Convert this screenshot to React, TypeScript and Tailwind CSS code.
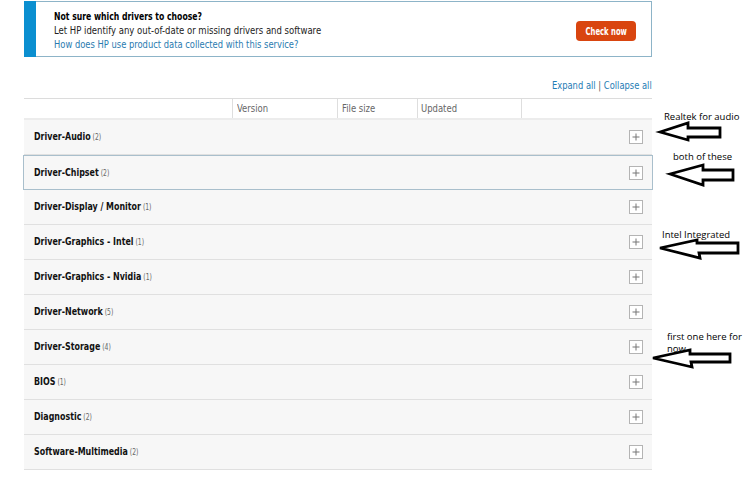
import React from "react";

const rows: { name: string; count: number; selected?: boolean }[] = [
  { name: "Driver-Audio", count: 2 },
  { name: "Driver-Chipset", count: 2, selected: true },
  { name: "Driver-Display / Monitor", count: 1 },
  { name: "Driver-Graphics - Intel", count: 1 },
  { name: "Driver-Graphics - Nvidia", count: 1 },
  { name: "Driver-Network", count: 5 },
  { name: "Driver-Storage", count: 4 },
  { name: "BIOS", count: 1 },
  { name: "Diagnostic", count: 2 },
  { name: "Software-Multimedia", count: 2 },
];

const hpFont = {
  fontFamily: '"DejaVu Sans Condensed", Roboto, sans-serif',
};
const noteFont = { fontFamily: '"Open Sans", Lato, sans-serif' };

function PlusBox() {
  return (
    <div className="w-[14px] h-[14px] border border-[#b4b4b4] bg-white flex items-center justify-center">
      <svg width="8" height="8" viewBox="0 0 8 8">
        <path d="M4 0.5V7.5M0.5 4H7.5" stroke="#777" strokeWidth="1" />
      </svg>
    </div>
  );
}

function Arrow({ d }: { d: string }) {
  return <path d={d} fill="white" stroke="black" strokeWidth="2.8" strokeLinejoin="miter" />;
}

export default function App() {
  return (
    <div className="relative w-[750px] h-[480px] bg-white overflow-hidden" style={hpFont}>
      <div className="ml-[24px] w-[628px]">
        {/* Banner */}
        <div className="mt-px h-[56px] border border-[#8db4c8] flex">
          <div className="w-[12px] bg-[#0b8fd0] -my-px -ml-px" />
          <div className="flex-1 pl-[18px] pt-[8px] text-[11px] leading-[14px] whitespace-nowrap">
            <div className="font-bold text-black origin-left scale-x-[0.78]">Not sure which drivers to choose?</div>
            <div className="text-[#222] origin-left scale-x-[0.86]">Let HP identify any out-of-date or missing drivers and software</div>
            <div className="text-[#2a7bb0] origin-left scale-x-[0.845]">How does HP use product data collected with this service?</div>
          </div>
          <div className="pr-[15px] pt-[19px]">
            <div className="w-[60px] h-[20px] rounded-[4px] bg-[#d9450f] text-white text-[10px] font-bold flex items-center justify-center">
              <span className="inline-block scale-x-[0.76]">Check now</span>
            </div>
          </div>
        </div>

        {/* Expand/collapse */}
        <div className="mt-[21px] h-[14px] flex justify-end text-[10.5px] leading-[14px] text-[#1f7db5]">
          <span className="inline-block origin-right scale-x-[0.885] whitespace-nowrap">
            Expand all<span className="mx-[3px] text-[#555]">|</span>Collapse all
          </span>
        </div>

        {/* Table */}
        <div className="mt-[6px] border-t border-[#dcdcdc]">
          <div className="h-[21px] flex text-[10px] text-[#666] border-b-2 border-[#ececec]">
            <div className="w-[208px]" />
            <div className="w-[105px] border-l border-[#dedede] pl-[4px] flex items-center">
              <span className="inline-block origin-left scale-x-[0.94]">Version</span>
            </div>
            <div className="w-[80px] border-l border-[#dedede] pl-[4px] flex items-center">
              <span className="inline-block origin-left scale-x-[0.94]">File size</span>
            </div>
            <div className="w-[104px] border-l border-[#dedede] pl-[3px] flex items-center">
              <span className="inline-block origin-left scale-x-[0.94]">Updated</span>
            </div>
            <div className="flex-1 border-l border-[#dedede]" />
          </div>
          {rows.map((r) => (
            <div
              key={r.name}
              className={
                r.selected
                  ? "h-[35px] -mx-px px-[10px] flex items-center justify-between bg-[#f7f7f7] border border-[#a9bfcc]"
                  : "h-[35px] px-[10px] flex items-center justify-between bg-[#f7f7f7] border-b border-[#e0e0e0]"
              }
            >
              <div className="text-[10.5px] text-[#111] whitespace-nowrap inline-block origin-left scale-x-[0.84]">
                <span className="font-bold">{r.name}</span>
                <span className="text-[8px] text-[#666]"> ({r.count})</span>
              </div>
              <div className="mr-[-1px]">
                <PlusBox />
              </div>
            </div>
          ))}
        </div>
      </div>

      {/* Annotations */}
      <svg className="absolute left-0 top-0" width="750" height="480">
        <Arrow d="M660 132 L688 123 L688 128 L720 128 L720 137 L688 137 L688 140 Z" />
        <Arrow d="M670 174 L703 165 L703 170 L733 170 L733 180 L703 180 L703 185 Z" />
        <Arrow d="M660 248 L697 240 L697 243 L738 243 L738 253 L699 253 L700 258 Z" />
        <Arrow d="M653 358 L690 350 L690 354 L730 354 L730 362 L691 362 L692 367 Z" />
      </svg>
      <div className="absolute left-[664px] top-[111px] text-[9.5px] leading-[12px] text-black" style={noteFont}>
        Realtek for audio
      </div>
      <div className="absolute left-[673px] top-[151px] text-[9.5px] leading-[12px] text-black" style={noteFont}>
        both of these
      </div>
      <div className="absolute left-[662px] top-[229px] text-[9.5px] leading-[12px] text-black" style={noteFont}>
        Intel Integrated
      </div>
      <div className="absolute left-[667px] top-[331px] text-[9.5px] leading-[12px] text-black" style={noteFont}>
        first one here for
        <br />
        now
      </div>
    </div>
  );
}
